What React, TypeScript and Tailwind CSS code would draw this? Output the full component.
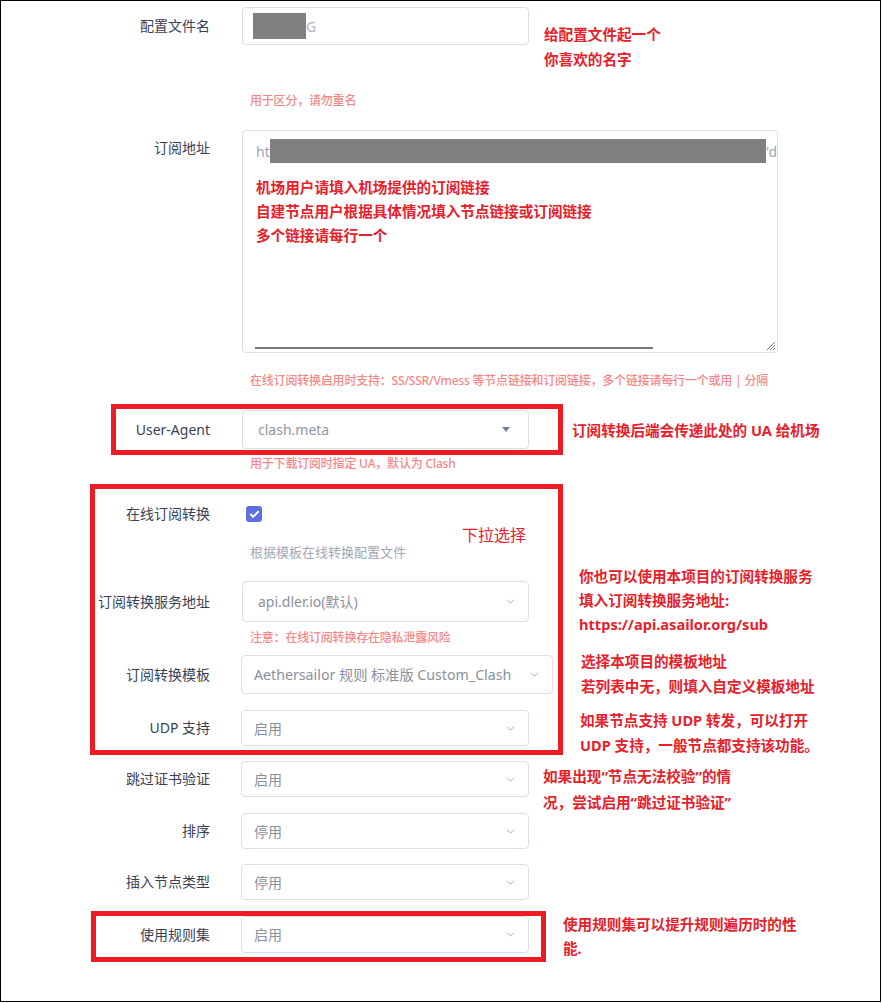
import { ChevronDown, Check } from 'lucide-react';
import type { ReactNode } from 'react';

const labelCls =
  'w-[209px] shrink-0 text-right text-[14px] leading-[20px] text-[#3a3f55]';
const helpCls = 'pl-[249px] text-[12px] font-medium tracking-[-0.2px] leading-[16px] text-[#f78787]';
const noteCls =
  'absolute font-bold text-[14.6px] text-[#e8202a] whitespace-nowrap';

function Row({ label, className, children }: { label: string; className: string; children: ReactNode }) {
  return (
    <div className={`flex items-center gap-[32px] ${className}`}>
      <div className={labelCls}>{label}</div>
      {children}
    </div>
  );
}

function Select({ value, className, textCls = 'text-[14px] pl-[12px]', right = 'pr-[11px]' }: { value: string; className: string; textCls?: string; right?: string }) {
  return (
    <div
      className={`flex items-center justify-between rounded-[4px] border border-[#dcdfe6] bg-white text-[#8a909c] ${textCls} ${right} ${className}`}
    >
      <span className="whitespace-nowrap">{value}</span>
      <ChevronDown className="h-[13px] w-[13px] text-[#97a1b3]" strokeWidth={1.6} />
    </div>
  );
}

export default function App() {
  return (
    <div
      className="relative h-[1002px] w-[881px] border border-black bg-white"
      style={{ fontFamily: '"Noto Sans", "Noto Sans CJK SC", sans-serif' }}
    >
      <div className="flex flex-col">
        {/* 配置文件名 */}
        <Row label="配置文件名" className="mt-[6px]">
          <div className="flex h-[38px] w-[287px] items-center rounded-[4px] border border-[#dcdfe6] pl-[10px] text-[14px] text-[#b0b5c0]">
            <span className="inline-block h-[26px] w-[53px] bg-[#808080]" />
            <span>G</span>
          </div>
        </Row>
        <div className={`${helpCls} mt-[48px]`}>用于区分，请勿重名</div>

        {/* 订阅地址 */}
        <div className="mt-[21px] flex items-start gap-[32px]">
          <div className={`${labelCls} mt-[8px]`}>订阅地址</div>
          <div className="relative h-[223px] w-[536px] rounded-[4px] border border-[#dcdfe6] pl-[13px] pt-[8px]">
            <div className="flex h-[24px] items-center text-[14px] text-[#9aa3b2]">
              <span>ht</span>
              <span className="inline-block h-[24px] w-[501px] bg-[#808080]" />
              <span>'d</span>
            </div>
            <div className="mt-[12px] font-bold text-[14.6px] leading-[24px] text-[#e8202a]">
              <div>机场用户请填入机场提供的订阅链接</div>
              <div>自建节点用户根据具体情况填入节点链接或订阅链接</div>
              <div>多个链接请每行一个</div>
            </div>
            <div className="absolute bottom-[3px] left-[12px] h-[2px] w-[398px] bg-[#7a7a7a]" />
            <svg className="absolute bottom-[1px] right-[1px]" width="12" height="12" viewBox="0 0 12 12">
              <path d="M11 3 L3 11 M11 6 L6 11 M11 9 L9 11" stroke="#777" strokeWidth="1" />
            </svg>
          </div>
        </div>
        <div className={`${helpCls} mt-[20px]`}>
          在线订阅转换启用时支持：SS/SSR/Vmess 等节点链接和订阅链接，多个链接请每行一个或用 | 分隔
        </div>

        {/* User-Agent */}
        <Row label="User-Agent" className="mt-[21px]">
          <div className="flex h-[39px] w-[287px] items-center justify-between rounded-[4px] border border-[#dcdfe6] pl-[15px] pr-[18px] text-[14px] text-[#8f96a3]">
            <span>clash.meta</span>
            <span className="h-0 w-0 border-x-[4px] border-t-[5px] border-x-transparent border-t-[#6b7fa0]" />
          </div>
        </Row>
        <div className={`${helpCls} mt-[7px]`}>用于下载订阅时指定 UA，默认为 Clash</div>

        {/* 在线订阅转换 */}
        <Row label="在线订阅转换" className="mt-[32px]">
          <div className="ml-[4px] flex h-[16px] w-[16px] items-center justify-center rounded-[3px] bg-[#5f6fe0]">
            <Check className="h-[11px] w-[11px] text-white" strokeWidth={4} />
          </div>
        </Row>
        <div className="mt-[19px] pl-[249px] text-[13px] leading-[18px] text-[#a3a6b4]">根据模板在线转换配置文件</div>

        <Row label="订阅转换服务地址" className="mt-[20px]">
          <Select value="api.dler.io(默认)" className="h-[41px] w-[287px]" textCls="text-[14px] pl-[15px] text-[#7d8290]" />
        </Row>
        <div className={`${helpCls} mt-[8px]`}>注意：在线订阅转换存在隐私泄露风险</div>

        <Row label="订阅转换模板" className="mt-[9px]">
          <Select
            value="Aethersailor 规则 标准版 Custom_Clash"
            className="-ml-[1px] h-[39px] w-[312px]"
            textCls="text-[14.2px] pl-[12px]"
          />
        </Row>

        <Row label="UDP 支持" className="mt-[16px]">
          <Select value="启用" className="-ml-[1px] h-[36px] w-[288px]" />
        </Row>
        <Row label="跳过证书验证" className="mt-[15px]">
          <Select value="启用" className="-ml-[1px] h-[36px] w-[288px]" />
        </Row>
        <Row label="排序" className="mt-[16px]">
          <Select value="停用" className="-ml-[1px] h-[36px] w-[288px]" />
        </Row>
        <Row label="插入节点类型" className="mt-[15px]">
          <Select value="停用" className="-ml-[1px] h-[36px] w-[288px]" />
        </Row>
        <Row label="使用规则集" className="mt-[16px]">
          <Select value="启用" className="-ml-[1px] h-[37px] w-[288px]" />
        </Row>
      </div>

      {/* annotation boxes */}
      <div className="pointer-events-none absolute left-[110px] top-[403px] h-[51px] w-[452px] border-[5px] border-[#ed1c24]" />
      <div className="pointer-events-none absolute left-[89px] top-[483px] h-[271px] w-[473px] border-[5px] border-[#ed1c24]" />
      <div className="pointer-events-none absolute left-[90px] top-[910px] h-[51px] w-[455px] border-[5px] border-[#ed1c24]" />

      {/* annotation notes */}
      <div className={`${noteCls} left-[543px] top-[21px] leading-[25px]`}>
        <div>给配置文件起一个</div>
        <div>你喜欢的名字</div>
      </div>
      <div className={`${noteCls} left-[571px] top-[417px] leading-[25px]`}>订阅转换后端会传递此处的 UA 给机场</div>
      <div className="absolute left-[461px] top-[522px] text-[16px] leading-[24px] text-[#e8202a]">下拉选择</div>
      <div className={`${noteCls} left-[578px] top-[563px] leading-[24px]`}>
        <div>你也可以使用本项目的订阅转换服务</div>
        <div>填入订阅转换服务地址:</div>
        <div>https://api.asailor.org/sub</div>
      </div>
      <div className={`${noteCls} left-[580px] top-[648px] leading-[25px]`}>
        <div>选择本项目的模板地址</div>
        <div>若列表中无，则填入自定义模板地址</div>
      </div>
      <div className={`${noteCls} left-[579px] top-[707px] leading-[25px]`}>
        <div>如果节点支持 UDP 转发，可以打开</div>
        <div>UDP 支持，一般节点都支持该功能。</div>
      </div>
      <div className={`${noteCls} left-[542px] top-[762px] leading-[26px]`}>
        <div>如果出现“节点无法校验”的情</div>
        <div>况，尝试启用“跳过证书验证”</div>
      </div>
      <div className={`${noteCls} left-[562px] top-[911px] leading-[24px]`}>
        <div>使用规则集可以提升规则遍历时的性</div>
        <div>能.</div>
      </div>
    </div>
  );
}
